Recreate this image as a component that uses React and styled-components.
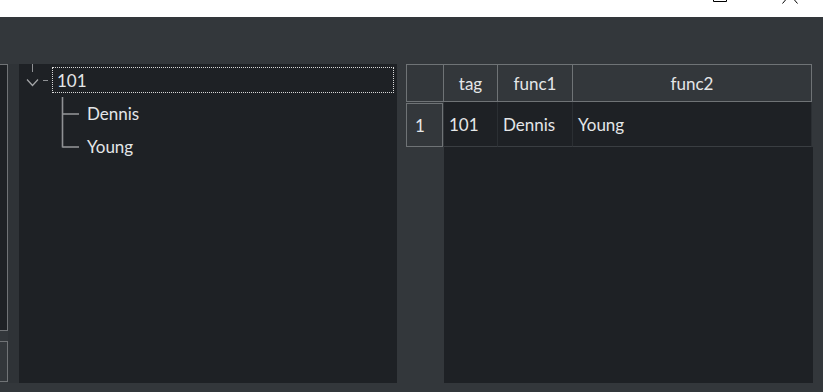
import React from 'react'
import styled, { createGlobalStyle } from 'styled-components'

const GlobalStyle = createGlobalStyle`
  html, body {
    margin: 0;
    padding: 0;
    background: #33373b;
    overflow: hidden;
  }
  * { box-sizing: border-box; }
`;

const Window = styled.div`
  width: 823px;
  height: 392px;
  display: flex;
  flex-direction: column;
  background: #33373b;
  font-family: Lato, "Noto Sans", sans-serif;
  font-size: 17px;
  color: #e4e6e8;
`;

const TitleStrip = styled.div`
  height: 17px;
  background: #ffffff;
  display: flex;
  justify-content: flex-end;
  align-items: flex-start;
  gap: 54px;
  padding-right: 25px;
  overflow: hidden;
`;

const Toolbar = styled.div`
  height: 47px;
`;

const Main = styled.div`
  height: 319px;
  display: flex;
  padding-right: 10px;
`;

const LeftStub = styled.div`
  width: 8px;
  display: flex;
  flex-direction: column;
  gap: 10px;
  padding-bottom: 1px;
`;

const StubBox = styled.div`
  height: ${({ h }) => h}px;
  background: ${({ dark }) => (dark ? '#1e2125' : '#33373b')};
  border: 1px solid #707376;
  border-left: none;
`;

const Splitter = styled.div`
  width: 11px;
  background: #2f3337;
`;

const TreePanel = styled.div`
  width: 378px;
  background: #1e2125;
  margin-right: 9px;
  display: flex;
  flex-direction: column;
`;

const TreeRow = styled.div`
  display: flex;
  align-items: ${({ root }) => (root ? 'flex-start' : 'center')};
  height: ${({ root }) => (root ? 29 : 33)}px;
`;

const Gutter = styled.svg`
  flex: none;
  display: block;
`;

const RootLabel = styled.div`
  flex: 1;
  height: 26px;
  margin-top: 3px;
  margin-right: 3px;
  border: 1px dotted #d8d8d8;
  padding-left: 4px;
  display: flex;
  align-items: center;
`;

const Children = styled.div`
  margin-top: 4px;
  display: flex;
  flex-direction: column;
`;

const ChildLabel = styled.span`
  line-height: 1;
`;

const TablePanel = styled.div`
  flex: 1;
  display: flex;
  flex-direction: column;
`;

const Grid = styled.div`
  display: grid;
  grid-template-columns: 38px 54px 75px 239px 1px;
`;

const HeaderCell = styled.div`
  height: 38px;
  border-top: 1px solid #6f7376;
  border-bottom: 1px solid #6f7376;
  border-right: 1px solid #6f7376;
  border-left: ${({ first }) => (first ? '1px solid #6f7376' : 'none')};
  display: flex;
  align-items: center;
  justify-content: center;
  background: #33373b;
`;

const RowHeader = styled.div`
  height: 44px;
  margin-top: 1px;
  margin-right: 1px;
  border: 1px solid #6f7376;
  display: flex;
  align-items: center;
  padding-left: 8px;
  background: #33373b;
`;

const DataCell = styled.div`
  height: 45px;
  background: #1e2125;
  border-right: 1px solid #2b2f33;
  border-bottom: 1px solid #3a3e42;
  display: flex;
  align-items: center;
  padding-left: 5px;
`;

const Filler = styled.div``;

const EmptyArea = styled.div`
  flex: 1;
  display: flex;
`;

const EmptyRowHeader = styled.div`
  width: 38px;
`;

const EmptyBody = styled.div`
  flex: 1;
  background: #1e2125;
`;

const lineColor = '#8f9194';

const App = () => {
  const rows = [{ tag: '101', func1: 'Dennis', func2: 'Young' }];

  return <>
    <GlobalStyle />
    <Window>
      <TitleStrip>
        <svg width="16" height="4" viewBox="0 0 16 4">
          <path d="M1.5 -6 V1.5 H14.5 V-6" fill="none" stroke="#000" strokeWidth="1" />
        </svg>
        <svg width="16" height="4" viewBox="0 0 16 4">
          <path d="M0.5 3.5 L3.5 0 M15.5 3.5 L12.5 0" fill="none" stroke="#000" strokeWidth="1" />
        </svg>
      </TitleStrip>
      <Toolbar />
      <Main>
        <LeftStub>
          <StubBox dark h={267} />
          <StubBox h={41} />
        </LeftStub>
        <Splitter />
        <TreePanel>
          <TreeRow root>
            <Gutter width="33" height="29" viewBox="0 0 33 29">
              <path d="M13.5 0 V8" stroke={lineColor} strokeWidth="1" />
              <path d="M8 15.5 L13.5 21.5 L19 15.5" fill="none" stroke="#a4a6a8" strokeWidth="1.2" />
              <path d="M24 16.5 H29" stroke={lineColor} strokeWidth="1" />
            </Gutter>
            <RootLabel>101</RootLabel>
          </TreeRow>
          <Children>
            {['Dennis', 'Young'].map((name, i) => (
              <TreeRow key={name}>
                <Gutter width="68" height="33" viewBox="0 0 68 33">
                  <path d={i === 0 ? 'M43.5 0 V33' : 'M43.5 0 V17.5'} stroke={lineColor} strokeWidth="1.6" />
                  <path d="M43.5 17 H60" stroke={lineColor} strokeWidth="1.6" />
                </Gutter>
                <ChildLabel>{name}</ChildLabel>
              </TreeRow>
            ))}
          </Children>
        </TreePanel>
        <TablePanel>
          <Grid>
            <HeaderCell first />
            <HeaderCell>tag</HeaderCell>
            <HeaderCell>func1</HeaderCell>
            <HeaderCell>func2</HeaderCell>
            <Filler />
            {rows.map((r, i) => (
              <React.Fragment key={i}>
                <RowHeader>{i + 1}</RowHeader>
                <DataCell>{r.tag}</DataCell>
                <DataCell>{r.func1}</DataCell>
                <DataCell>{r.func2}</DataCell>
                <Filler />
              </React.Fragment>
            ))}
          </Grid>
          <EmptyArea>
            <EmptyRowHeader />
            <EmptyBody />
          </EmptyArea>
        </TablePanel>
      </Main>
    </Window>
  </>
}

export default App
